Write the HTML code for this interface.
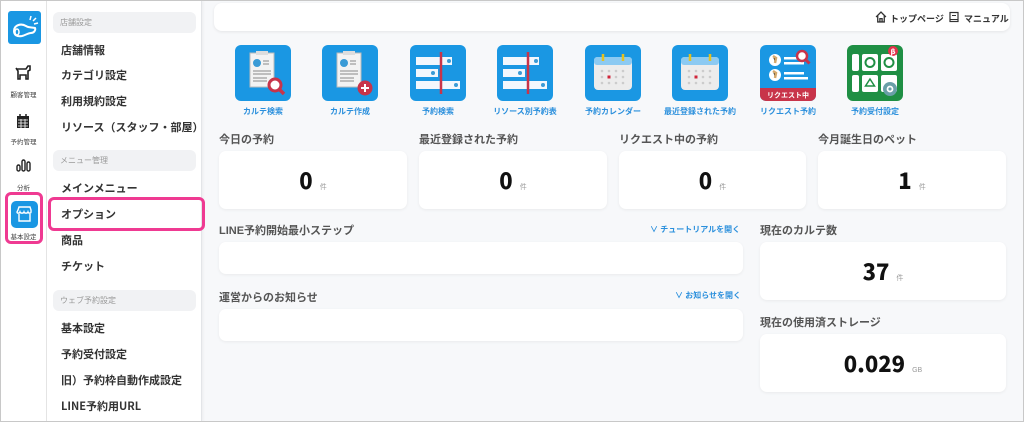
<!DOCTYPE html>
<html><head><meta charset="utf-8">
<style>
*{box-sizing:border-box;margin:0;padding:0}
body{width:1024px;height:422px;overflow:hidden;font-family:"Liberation Sans","Noto Sans CJK JP",sans-serif;background:#f7f8fa;position:relative;color:#222}
.frame{position:absolute;left:0;top:0;width:1024px;height:422px;border:1px solid #c8c8c8;z-index:50;pointer-events:none}
.rail{position:absolute;left:0;top:0;width:47px;height:422px;background:#fff;border-right:1px solid #e6e6e6}
.side{position:absolute;left:47px;top:0;width:155px;height:422px;background:#fff;border-right:1px solid #e3e5e8;box-shadow:1px 0 3px rgba(0,0,0,.05)}
.sec{position:absolute;left:6px;width:143px;height:21px;background:#f1f2f4;border-radius:6px;font-size:8px;color:#999;line-height:21px;padding-left:7px}
.it{position:absolute;left:14px;font-size:11px;font-weight:bold;color:#333;font-family:"Noto Sans CJK JP",sans-serif;line-height:14px}
.rl{position:absolute;width:47px;text-align:center;font-size:6.5px;color:#444}
.pink{position:absolute;border:3px solid #ef3a92;border-radius:6px}
.hdr{position:absolute;left:214px;top:3px;width:796px;height:28px;background:#fff;border-radius:8px;box-shadow:0 1px 3px rgba(0,0,0,.08)}
.hl{position:absolute;top:9px;font-size:9px;color:#333;font-weight:bold;white-space:nowrap}
.tile{position:absolute;top:45px;width:56px;height:56px;border-radius:6px;background:#1a97e3;overflow:hidden}
.tl{position:absolute;top:106px;width:110px;text-align:center;font-size:8px;color:#2a8fdc;font-weight:bold}
.ct{position:absolute;font-size:11px;font-weight:bold;color:#555}
.card{position:absolute;background:#fff;border-radius:7px;box-shadow:0 1px 3px rgba(0,0,0,.06);text-align:center}
.num{font-size:22px;font-weight:900;color:#111;font-family:"Noto Sans CJK JP","Liberation Sans",sans-serif;line-height:26px}
.u{font-size:7px;color:#999;margin-left:7px;font-weight:normal}
.lk{position:absolute;font-size:8px;color:#2a8fdc;font-weight:bold}
</style></head><body>
<div class="frame"></div>
<div class="rail">
  <div style="position:absolute;left:8px;top:11px;width:33px;height:33px;background:#1a97e3;border-radius:3px">
    <svg width="33" height="33" viewBox="0 0 33 33"><path d="M6 20c0-6 7-8 12-5 3 2 6 1 9 2 1 2-1 5-4 5-3 0-5 2-9 3-5 1-8-1-8-5z" fill="none" stroke="#fff" stroke-width="2"/><ellipse cx="9" cy="21" rx="2" ry="3" fill="none" stroke="#fff" stroke-width="1.5"/><path d="M22 9l1-4M25 10l3-3M26 13l4-1" stroke="#fff" stroke-width="1.5"/></svg>
  </div>
  <svg style="position:absolute;left:15px;top:64px" width="17" height="16" viewBox="0 0 17 16"><path d="M2 5h9l2-3h2v4l-2 1v8h-2v-4H5v4H3V7L1 4" fill="none" stroke="#222" stroke-width="1.6"/></svg>
  <div class="rl" style="top:89px">顧客管理</div>
  <svg style="position:absolute;left:16px;top:114px" width="14" height="15" viewBox="0 0 14 15"><rect x="1" y="2" width="12" height="12" fill="#222"/><path d="M4 0v3M10 0v3" stroke="#222" stroke-width="1.5"/><path d="M2 6h10M2 9h10M2 12h10M5 5v9M9 5v9" stroke="#fff" stroke-width=".8"/></svg>
  <div class="rl" style="top:136px">予約管理</div>
  <svg style="position:absolute;left:16px;top:158px" width="15" height="14" viewBox="0 0 15 14"><rect x="1" y="7" width="3" height="6" rx="1.5" fill="none" stroke="#222" stroke-width="1.4"/><rect x="6" y="2" width="3" height="11" rx="1.5" fill="none" stroke="#222" stroke-width="1.4"/><rect x="11" y="4" width="3" height="9" rx="1.5" fill="none" stroke="#222" stroke-width="1.4"/></svg>
  <div class="rl" style="top:182px">分析</div>
  <div style="position:absolute;left:11px;top:201px;width:27px;height:27px;background:#1a97e3;border-radius:5px">
    <svg width="27" height="27" viewBox="0 0 27 27"><path d="M7 9l1-3h11l1 3v2c0 1.5-2.5 1.5-3 0-.5 1.5-3.5 1.5-4 0-.5 1.5-3.5 1.5-4 0-.5 1.5-3 1.5-3 0z" fill="none" stroke="#fff" stroke-width="1.4"/><path d="M8 13v7h11v-7" fill="none" stroke="#fff" stroke-width="1.4"/></svg>
  </div>
  <div class="rl" style="top:231px">基本設定</div>
</div>
<div class="side">
  <div class="sec" style="top:12px">店舗設定</div>
  <div class="it" style="top:43px">店舗情報</div>
  <div class="it" style="top:68px">カテゴリ設定</div>
  <div class="it" style="top:94px">利用規約設定</div>
  <div class="it" style="top:120px">リソース（スタッフ・部屋）</div>
  <div class="sec" style="top:150px">メニュー管理</div>
  <div class="it" style="top:181px">メインメニュー</div>
  <div class="it" style="top:207px">オプション</div>
  <div class="it" style="top:233px">商品</div>
  <div class="it" style="top:259px">チケット</div>
  <div class="sec" style="top:290px">ウェブ予約設定</div>
  <div class="it" style="top:321px">基本設定</div>
  <div class="it" style="top:347px">予約受付設定</div>
  <div class="it" style="top:373px">旧）予約枠自動作成設定</div>
  <div class="it" style="top:399px">LINE予約用URL</div>
</div>
<div class="pink" style="left:5px;top:192px;width:38px;height:52px"></div>
<div class="pink" style="left:48px;top:197px;width:157px;height:34px"></div>

<div class="hdr">
  <svg style="position:absolute;left:661px;top:8px" width="12" height="12" viewBox="0 0 11 11"><path d="M1 5.5L5.5 1 10 5.5M2.5 4.5V10h6V4.5M4.5 10V7h2v3" fill="none" stroke="#333" stroke-width="1.2"/></svg>
  <div class="hl" style="left:676px">トップページ</div>
  <svg style="position:absolute;left:735px;top:8px" width="10" height="12" viewBox="0 0 10 11"><rect x="1" y="1" width="8" height="9" fill="none" stroke="#333" stroke-width="1.2"/><path d="M3 4h4M1 8h8" stroke="#333" stroke-width="1"/></svg>
  <div class="hl" style="left:750px">マニュアル</div>
</div>

<div class="tile" style="left:235px"><svg width="56" height="56"><rect x="15" y="8" width="24" height="34" fill="#f3f3f3" stroke="#bbb"/><rect x="21" y="6" width="12" height="4" fill="#ddd"/><circle cx="22" cy="18" r="4" fill="#3a9bd6"/><path d="M28 16h6M28 19h6M18 26h18M18 29h18M18 33h14M18 36h14" stroke="#888"/><circle cx="40" cy="40" r="6" fill="#fff" stroke="#c8344a" stroke-width="3"/><path d="M44 44l5 5" stroke="#c8344a" stroke-width="3.5"/></svg></div>
<div class="tile" style="left:322px"><svg width="56" height="56"><rect x="15" y="8" width="24" height="34" fill="#f3f3f3" stroke="#bbb"/><rect x="21" y="6" width="12" height="4" fill="#ddd"/><circle cx="22" cy="18" r="4" fill="#3a9bd6"/><path d="M28 16h6M28 19h6M18 26h18M18 29h18M18 33h14M18 36h14" stroke="#888"/><circle cx="43" cy="43" r="7.5" fill="#c8344a"/><path d="M43 39v8M39 43h8" stroke="#fff" stroke-width="2"/></svg></div>
<div class="tile" style="left:410px"><svg width="56" height="56"><rect x="6" y="12" width="36" height="8" fill="#f2f7fd"/><rect x="6" y="24" width="22" height="8" fill="#f2f7fd"/><rect x="6" y="36" width="44" height="8" fill="#f2f7fd"/><circle cx="39" cy="16" r="2" fill="#3a9bd6"/><circle cx="23" cy="28" r="2" fill="#3a9bd6"/><circle cx="46" cy="40" r="2" fill="#3a9bd6"/><path d="M31 7v42" stroke="#c8344a" stroke-width="2.5"/></svg></div>
<div class="tile" style="left:497px"><svg width="56" height="56"><rect x="6" y="12" width="36" height="8" fill="#f2f7fd"/><rect x="6" y="24" width="22" height="8" fill="#f2f7fd"/><rect x="6" y="36" width="44" height="8" fill="#f2f7fd"/><circle cx="39" cy="16" r="2" fill="#3a9bd6"/><circle cx="23" cy="28" r="2" fill="#3a9bd6"/><circle cx="46" cy="40" r="2" fill="#3a9bd6"/><path d="M31 7v42" stroke="#c8344a" stroke-width="2.5"/></svg></div>
<div class="tile" style="left:585px"><svg width="56" height="56"><rect x="9" y="12" width="38" height="33" rx="4" fill="#ececec"/><rect x="9" y="12" width="38" height="8" rx="3" fill="#8ccaf2"/><path d="M18 9v7M38 9v7" stroke="#e6c020" stroke-width="2.5"/><g fill="#ccc"><circle cx="17" cy="26" r="1.3"/><circle cx="24" cy="26" r="1.3"/><circle cx="31" cy="26" r="1.3"/><circle cx="38" cy="26" r="1.3"/><circle cx="17" cy="32" r="1.3"/><circle cx="31" cy="32" r="1.3"/><circle cx="38" cy="32" r="1.3"/><circle cx="17" cy="38" r="1.3"/><circle cx="24" cy="38" r="1.3"/><circle cx="31" cy="38" r="1.3"/><circle cx="38" cy="38" r="1.3"/></g><rect x="22.5" y="30.5" width="3" height="3" fill="#d0263a"/></svg></div>
<div class="tile" style="left:672px"><svg width="56" height="56"><rect x="9" y="12" width="38" height="33" rx="4" fill="#ececec"/><rect x="9" y="12" width="38" height="8" rx="3" fill="#8ccaf2"/><path d="M18 9v7M38 9v7" stroke="#e6c020" stroke-width="2.5"/><g fill="#ccc"><circle cx="17" cy="26" r="1.3"/><circle cx="24" cy="26" r="1.3"/><circle cx="31" cy="26" r="1.3"/><circle cx="38" cy="26" r="1.3"/><circle cx="17" cy="32" r="1.3"/><circle cx="31" cy="32" r="1.3"/><circle cx="38" cy="32" r="1.3"/><circle cx="17" cy="38" r="1.3"/><circle cx="24" cy="38" r="1.3"/><circle cx="31" cy="38" r="1.3"/><circle cx="38" cy="38" r="1.3"/></g><rect x="22.5" y="30.5" width="3" height="3" fill="#d0263a"/></svg></div>
<div class="tile" style="left:760px"><svg width="56" height="56"><rect x="0" y="43" width="56" height="13" fill="#c8344a"/><text x="28" y="52.5" font-size="7" fill="#fff" text-anchor="middle" font-family="Liberation Sans,Noto Sans CJK JP,sans-serif" font-weight="bold">リクエスト中</text><circle cx="15" cy="15" r="6" fill="#fff"/><circle cx="15" cy="30" r="6" fill="#fff"/><path d="M13 11l3 2-1 5M13 26l3 2-1 5" stroke="#d4a86a" stroke-width="2.5"/><rect x="24" y="12" width="16" height="2.5" fill="#fff"/><rect x="24" y="17" width="20" height="2.5" fill="#fff"/><rect x="24" y="27" width="20" height="2.5" fill="#fff"/><rect x="24" y="32" width="24" height="2.5" fill="#fff"/><circle cx="42" cy="11" r="5" fill="#fff" stroke="#c8344a" stroke-width="2.5"/><path d="M45.5 14.5l4 4" stroke="#c8344a" stroke-width="3"/></svg></div>
<div class="tile" style="left:847px;background:#1f8f44"><svg width="56" height="56"><rect x="5" y="9" width="7" height="17" rx="2" fill="#fff"/><rect x="5" y="30" width="7" height="17" rx="2" fill="#fff"/><rect x="15" y="9" width="16" height="17" rx="2" fill="#fff"/><rect x="34" y="9" width="16" height="17" rx="2" fill="#fff"/><rect x="15" y="30" width="16" height="17" rx="2" fill="#fff"/><rect x="34" y="30" width="16" height="17" rx="2" fill="#fff"/><circle cx="23" cy="17.5" r="4.5" fill="none" stroke="#1f8f44" stroke-width="2"/><circle cx="42" cy="17.5" r="4.5" fill="none" stroke="#1f8f44" stroke-width="2"/><path d="M23 34l4.5 7h-9z" fill="none" stroke="#1f8f44" stroke-width="1.5"/><circle cx="46" cy="6" r="5" fill="#e2334b"/><text x="46" y="9" font-size="7" fill="#fff" text-anchor="middle" font-weight="bold" font-family="DejaVu Sans,sans-serif">β</text><circle cx="43" cy="44" r="7" fill="#6a9fa8"/><circle cx="43" cy="44" r="2.5" fill="none" stroke="#fff" stroke-width="1.8"/></svg></div>
<div class="tl" style="left:208px">カルテ検索</div>
<div class="tl" style="left:295px">カルテ作成</div>
<div class="tl" style="left:383px">予約検索</div>
<div class="tl" style="left:470px">リソース別予約表</div>
<div class="tl" style="left:558px">予約カレンダー</div>
<div class="tl" style="left:645px">最近登録された予約</div>
<div class="tl" style="left:733px">リクエスト予約</div>
<div class="tl" style="left:820px">予約受付設定</div>

<div class="ct" style="left:219px;top:131px">今日の予約</div>
<div class="ct" style="left:419px;top:131px">最近登録された予約</div>
<div class="ct" style="left:619px;top:131px">リクエスト中の予約</div>
<div class="ct" style="left:818px;top:131px">今月誕生日のペット</div>
<div class="card" style="left:219px;top:151px;width:188px;height:58px;padding-top:16px"><span class="num">0</span><span class="u">件</span></div>
<div class="card" style="left:419px;top:151px;width:188px;height:58px;padding-top:16px"><span class="num">0</span><span class="u">件</span></div>
<div class="card" style="left:619px;top:151px;width:187px;height:58px;padding-top:16px"><span class="num">0</span><span class="u">件</span></div>
<div class="card" style="left:818px;top:151px;width:188px;height:58px;padding-top:16px"><span class="num">1</span><span class="u">件</span></div>

<div class="ct" style="left:219px;top:222px">LINE予約開始最小ステップ</div>
<div class="lk" style="left:650px;top:224px">∨ チュートリアルを開く</div>
<div class="card" style="left:219px;top:242px;width:524px;height:32px"></div>
<div class="ct" style="left:219px;top:289px">運営からのお知らせ</div>
<div class="lk" style="left:675px;top:290px">∨ お知らせを開く</div>
<div class="card" style="left:219px;top:309px;width:524px;height:32px"></div>

<div class="ct" style="left:760px;top:222px">現在のカルテ数</div>
<div class="card" style="left:760px;top:242px;width:246px;height:58px;padding-top:16px"><span class="num">37</span><span class="u">件</span></div>
<div class="ct" style="left:760px;top:314px">現在の使用済ストレージ</div>
<div class="card" style="left:760px;top:334px;width:246px;height:58px;padding-top:16px"><span class="num">0.029</span><span class="u">GB</span></div>
</body></html>
